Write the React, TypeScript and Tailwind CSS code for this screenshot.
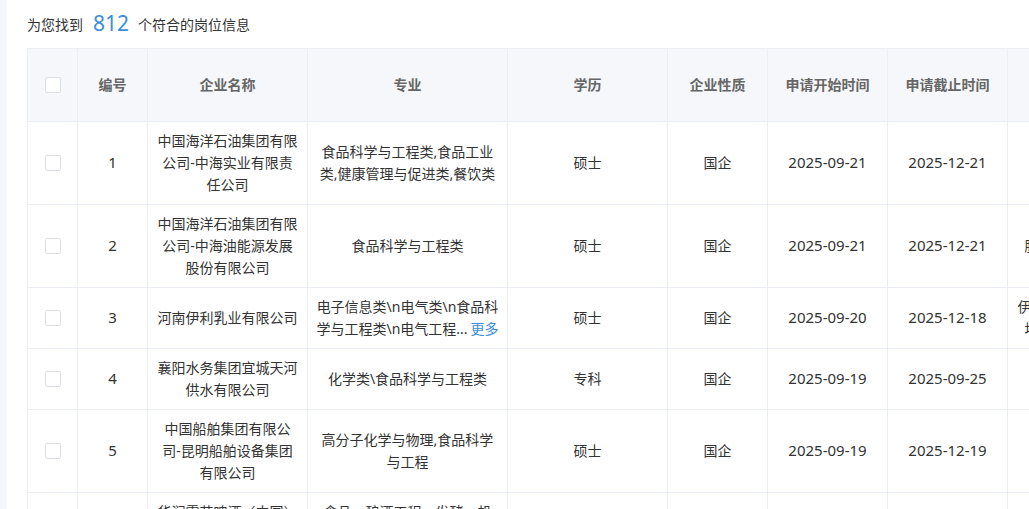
const cols = [50, 70, 160, 200, 160, 100, 120, 120, 160];

const rows = [
  { n: "1", company: "中国海洋石油集团有限公司-中海实业有限责任公司", major: "食品科学与工程类,食品工业类,健康管理与促进类,餐饮类", edu: "硕士", start: "2025-09-21", end: "2025-12-21", extra: "" },
  { n: "2", company: "中国海洋石油集团有限公司-中海油能源发展股份有限公司", major: "食品科学与工程类", edu: "硕士", start: "2025-09-21", end: "2025-12-21", extra: "脂质检测技术工程师" },
  { n: "3", company: "河南伊利乳业有限公司", major: "电子信息类\\n电气类\\n食品科学与工程类\\n电气工程...", more: true, edu: "硕士", start: "2025-09-20", end: "2025-12-18", extra: "伊利液奶事业部管培生地区销售储备干部岗" },
  { n: "4", company: "襄阳水务集团宜城天河供水有限公司", major: "化学类\\食品科学与工程类", edu: "专科", start: "2025-09-19", end: "2025-09-25", extra: "" },
  { n: "5", company: "中国船舶集团有限公司-昆明船舶设备集团有限公司", major: "高分子化学与物理,食品科学与工程", edu: "硕士", start: "2025-09-19", end: "2025-12-19", extra: "" },
  { n: "6", company: "华润雪花啤酒（中国）有限公司", major: "食品、酿酒工程、发酵、机械、自动化", edu: "硕士", start: "2025-09-19", end: "2025-12-19", extra: "" },
];

const cell = "border-r border-b border-[#ebeef5] px-2 py-2 text-center align-middle";
const wide = "border-r border-b border-[#ebeef5] px-[7px] py-2 text-center align-middle";
const num = "border-r border-b border-[#ebeef5] px-2 pt-[7px] pb-[9px] text-center align-middle text-[15px]";

function Box() {
  return <span className="mx-auto block h-4 w-4 rounded-[2px] border border-[#dcdfe6] bg-white" />;
}

export default function App() {
  return (
    <div
      className="h-screen overflow-hidden bg-[#f4f8fd] pl-[7px] text-[14px] leading-[22px] text-[#333]"
      style={{ fontFamily: '"Noto Sans", "Noto Sans CJK SC", sans-serif' }}
    >
      <div className="h-full overflow-hidden bg-white pl-5">
        <div className="flex h-12 items-center gap-[10px] pt-[2px]">
          <span>为您找到</span>
          <span className="-mt-[5px] -mr-[1px] text-[21px] text-[#3b8ed8]">812</span>
          <span>个符合的岗位信息</span>
        </div>
        <table className="w-[1140px] table-fixed border-separate border-spacing-0 border-t border-l border-[#ebeef5]">
          <colgroup>
            {cols.map((w, i) => (
              <col key={i} style={{ width: w }} />
            ))}
          </colgroup>
          <thead>
            <tr className="h-[73px] bg-[#f5f7fa] font-bold text-[#666]">
              <th className={cell}><Box /></th>
              <th className={cell}>编号</th>
              <th className={cell}>企业名称</th>
              <th className={cell}>专业</th>
              <th className={cell}>学历</th>
              <th className={cell}>企业性质</th>
              <th className={cell}>申请开始时间</th>
              <th className={cell}>申请截止时间</th>
              <th className={cell}>岗位名称</th>
            </tr>
          </thead>
          <tbody>
            {rows.map((r) => (
              <tr key={r.n}>
                <td className={cell}><Box /></td>
                <td className={num}>{r.n}</td>
                <td className={cell}>{r.company}</td>
                <td className={wide}>
                  {r.major}
                  {r.more && <span className="ml-[3px] whitespace-nowrap text-[#3b8ed8]">更多</span>}
                </td>
                <td className={cell}>{r.edu}</td>
                <td className={cell}>国企</td>
                <td className={num}>{r.start}</td>
                <td className={num}>{r.end}</td>
                <td className={cell}>{r.extra}</td>
              </tr>
            ))}
          </tbody>
        </table>
      </div>
    </div>
  );
}
